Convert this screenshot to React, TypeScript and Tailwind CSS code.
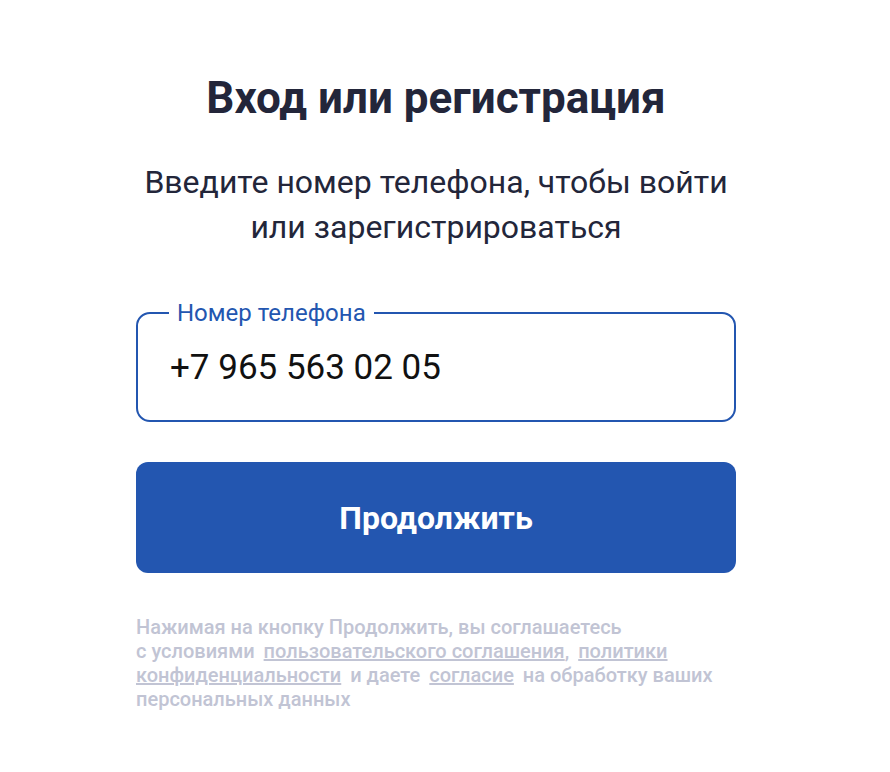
export default function App() {
  return (
    <div
      className="min-h-[772px] w-full bg-white flex justify-center pr-[18px]"
      style={{ fontFamily: "Roboto, 'Noto Sans', sans-serif" }}
    >
      <div className="w-[600px] pt-[72px] flex flex-col">
        <h1 className="text-center text-[44px] leading-[52px] font-bold text-[#23263a]">
          Вход или регистрация
        </h1>
        <p className="mt-[36px] text-center text-[32px] leading-[45px] text-[#23263a]">
          Введите номер телефона, чтобы войти
          <br />
          или зарегистрироваться
        </p>

        <fieldset className="mt-[49px] h-[123px] border-2 border-[#2356b0] rounded-[14px] px-[32px]">
          <legend className="px-[8px] -ml-[1px] text-[24px] leading-[28px] text-[#2356b0]">
            Номер телефона
          </legend>
          <div className="mt-[21px] text-[35px] leading-[40px] text-[#111]">
            +7 965 563 02 05
          </div>
        </fieldset>

        <button className="mt-[40px] h-[111px] rounded-[12px] bg-[#2356b0] text-white text-[32px] font-bold">
          Продолжить
        </button>

        <div className="mt-[42px] text-[20px] leading-[24px] font-medium text-[#c1c4d4]">
          <div>Нажимая на кнопку Продолжить, вы соглашаетесь</div>
          <div>
            с условиями <span className="ml-[4px] underline">пользовательского соглашения</span>,{" "}
            <span className="ml-[4px] underline">политики</span>
          </div>
          <div>
            <span className="underline">конфиденциальности</span>
            <span className="ml-[4px]"> и даете </span>
            <span className="ml-[4px] underline">согласие</span>
            <span className="ml-[4px]"> на обработку ваших</span>
          </div>
          <div>персональных данных</div>
        </div>
      </div>
    </div>
  );
}
